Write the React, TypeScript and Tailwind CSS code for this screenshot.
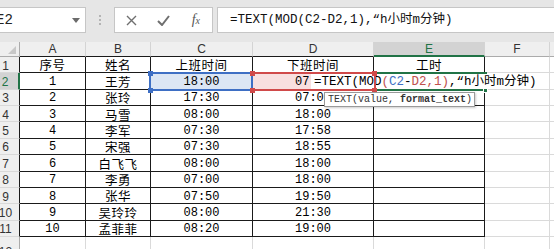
import React from "react";

const mono = "font-[family-name:Liberation_Mono,Noto_Sans_CJK_SC,monospace]";
const cjk = "font-[family-name:Noto_Sans_CJK_SC,sans-serif]";
const sans = "font-[family-name:Liberation_Sans,Arial,sans-serif]";

const rows = [
  ["1", "王芳", "18:00", "07:00"],
  ["2", "张玲", "17:30", "07:00"],
  ["3", "马雪", "08:00", "18:00"],
  ["4", "李军", "07:30", "17:58"],
  ["5", "宋强", "07:30", "18:55"],
  ["6", "白飞飞", "08:00", "18:00"],
  ["7", "李勇", "07:00", "18:00"],
  ["8", "张华", "07:50", "19:50"],
  ["9", "吴玲玲", "08:00", "21:30"],
  ["10", "孟菲菲", "08:20", "19:00"],
];

function FormulaBar() {
  return (
    <div className="h-[42px] bg-[#e6e6e6] flex items-start pt-[7px]">
      {/* name box */}
      <div className="w-[86px] h-[26px] bg-white border border-l-0 border-[#c6c6c6] flex items-center justify-between pr-[5px]">
        <span className={`-ml-[4px] text-[14px] text-[#222] ${mono}`}>E2</span>
        <svg width="8" height="5" viewBox="0 0 8 5">
          <path d="M0 0 L8 0 L4 5 Z" fill="#6b6b6b" />
        </svg>
      </div>
      <div className="w-[28px] flex flex-col items-center gap-[2px] pt-[8px]">
        <span className="w-[2px] h-[2px] bg-[#b4b4b4]" />
        <span className="w-[2px] h-[2px] bg-[#b4b4b4]" />
        <span className="w-[2px] h-[2px] bg-[#b4b4b4]" />
      </div>
      {/* cancel / enter / fx */}
      <div className="w-[99px] h-[26px] bg-white border border-[#c6c6c6] grid grid-cols-3 items-center justify-items-center">
        <svg width="11" height="11" viewBox="0 0 11 11">
          <path d="M1 1 L10 10 M10 1 L1 10" stroke="#6f6f6f" strokeWidth="1.4" />
        </svg>
        <svg width="13" height="11" viewBox="0 0 13 11">
          <path d="M1 6 L5 10 L12 1" stroke="#6f6f6f" strokeWidth="2" fill="none" />
        </svg>
        <span className="font-[family-name:Liberation_Serif,serif] italic text-[14px] text-[#555] leading-none">
          f<span className="text-[10px]">x</span>
        </span>
      </div>
      <div className="ml-[4px] flex-1 h-[26px] bg-white border border-r-0 border-[#c6c6c6] flex items-center pl-[12px]">
        <span className={`text-[12.5px] text-[#111] whitespace-nowrap ${mono}`}>
          =TEXT(MOD(C2-D2,1),“h小时m分钟)
        </span>
      </div>
    </div>
  );
}

function ColHead({ label, selected, last }: { label: string; selected?: boolean; last?: boolean }) {
  return (
    <div
      className={`flex items-center justify-center text-[12px] ${sans} border-r border-[#d4d4d4] ${
        selected
          ? "bg-[#d3d3d3] text-[#217346] border-b-2 border-b-[#217346]"
          : last
          ? "bg-[#efefef] text-[#333] border-b border-b-[#ababab]"
          : "bg-[#efefef] text-[#333] border-b border-b-[#1a1a1a]"
      }`}
    >
      {label}
    </div>
  );
}

function RowHead({ n, selected, inTable }: { n: number; selected?: boolean; inTable?: boolean }) {
  return (
    <div
      className={`flex items-center pt-[2px] pr-[8px] justify-center text-[12px] leading-none ${sans} border-b border-[#d9d9d9] ${
        selected
          ? "bg-[#d3d3d3] text-[#217346] border-r-2 border-r-[#217346]"
          : inTable
          ? "bg-[#efefef] text-[#333] border-r border-r-[#1a1a1a]"
          : "bg-[#efefef] text-[#333] border-r border-r-[#ababab]"
      }`}
    >
      {n}
    </div>
  );
}

const tcell = "border-r border-b border-[#1a1a1a] flex items-center justify-center text-black leading-none";
const gcell = "border-r border-b border-[#dadada]";

function Num({ children }: { children: React.ReactNode }) {
  return <span className={`${mono} text-[12px] translate-y-[1px]`}>{children}</span>;
}

function Han({ children }: { children: React.ReactNode }) {
  return <span className={`${cjk} text-[12.5px] tracking-[0.5px] translate-y-[1px]`}>{children}</span>;
}

function Sheet() {
  return (
    <div className="relative">
      <div className="grid grid-cols-[20px_66px_65px_102px_121px_111px_65px_40px] grid-rows-[15px_repeat(11,16.36px)_30px]">
        {/* header row */}
        <div className="bg-[#efefef] border-r border-b border-[#ababab] relative">
          <svg className="absolute left-[8px] top-[4px]" width="8" height="8" viewBox="0 0 8 8">
            <path d="M8 0 L8 8 L0 8 Z" fill="#c8c8c8" />
          </svg>
        </div>
        <ColHead label="A" />
        <ColHead label="B" />
        <ColHead label="C" />
        <ColHead label="D" />
        <ColHead label="E" selected />
        <ColHead label="F" last />
        <ColHead label="" last />

        {/* row 1: titles */}
        <RowHead n={1} inTable />
        <div className={tcell}><Han>序号</Han></div>
        <div className={tcell}><Han>姓名</Han></div>
        <div className={tcell}><Han>上班时间</Han></div>
        <div className={tcell}><Han>下班时间</Han></div>
        <div className={tcell}><Han>工时</Han></div>
        <div className={gcell} />
        <div className={gcell} />

        {rows.map((r, i) => (
          <React.Fragment key={r[0]}>
            <RowHead n={i + 2} inTable selected={i === 0} />
            <div className={tcell}><Num>{r[0]}</Num></div>
            <div className={tcell}><Han>{r[1]}</Han></div>
            <div className={`${tcell} ${i === 0 ? "bg-[#dce6f4]" : ""}`}><Num>{r[2]}</Num></div>
            <div className={`${tcell} ${i === 0 ? "bg-[#f8e0e0]" : ""}`}><Num>{r[3]}</Num></div>
            <div className={tcell} />
            <div className={gcell} />
            <div className={gcell} />
          </React.Fragment>
        ))}

        {/* row 12 */}
        <RowHead n={12} />
        <div className={gcell} />
        <div className={gcell} />
        <div className={gcell} />
        <div className={gcell} />
        <div className={gcell} />
        <div className={gcell} />
        <div className={gcell} />
      </div>

      {/* in-cell editor of E2, spilling over D2 and F2 */}
      <div className="absolute left-[311px] top-[32px] w-[236px] h-[15px] bg-white flex items-center pl-[3px]">
        <span className={`text-[12.5px] text-black whitespace-nowrap leading-none translate-y-[1px] ${mono}`}>
          =TEXT(MOD<span className="text-[#c0504d]">(</span>
          <span className="text-[#3e6fc4]">C2</span>-<span className="text-[#c0504d]">D2</span>
          <span className="text-[#c0504d]">,1)</span>,“h小时m分钟)
        </span>
      </div>

      {/* E2 active cell (green) */}
      <div className="absolute left-[372px] top-[30px] w-[115px] h-[2px] bg-[#217346]" />
      <div className="absolute left-[372px] top-[47px] w-[115px] h-[2px] bg-[#217346]" />
      <div className="absolute left-[483px] top-[46px] w-[5px] h-[5px] bg-[#217346] border border-white" />

      {/* D2 reference (red) */}
      <div className="absolute left-[251px] top-[30px] w-[125px] h-[19px] border-2 border-[#d04a4a]" />
      {/* C2 reference (blue) */}
      <div className="absolute left-[149px] top-[30px] w-[104px] h-[19px] border-2 border-[#3e6fc4]" />
      <div className="absolute left-[148px] top-[29px] w-[5px] h-[5px] bg-[#3e6fc4]" />
      <div className="absolute left-[148px] top-[46px] w-[5px] h-[5px] bg-[#3e6fc4]" />
      <div className="absolute left-[250px] top-[29px] w-[5px] h-[5px] bg-[#d04a4a]" />
      <div className="absolute left-[250px] top-[46px] w-[5px] h-[5px] bg-[#d04a4a]" />
      <div className="absolute left-[372px] top-[29px] w-[5px] h-[5px] bg-[#d04a4a]" />
      <div className="absolute left-[372px] top-[46px] w-[5px] h-[5px] bg-[#d04a4a]" />

      {/* function tooltip */}
      <div className="absolute left-[324px] top-[50px] w-[151px] h-[15px] bg-white border border-[#9a9a9a] shadow-[1px_1px_2px_rgba(0,0,0,0.2)] flex items-center pl-[3px]">
        <span className={`text-[10px] text-[#333] whitespace-nowrap leading-none ${mono}`}>
          TEXT(value, <b>format_text</b>)
        </span>
      </div>
    </div>
  );
}

export default function App() {
  return (
    <div className="w-[554px] h-[249px] overflow-hidden bg-white">
      <FormulaBar />
      <Sheet />
    </div>
  );
}
